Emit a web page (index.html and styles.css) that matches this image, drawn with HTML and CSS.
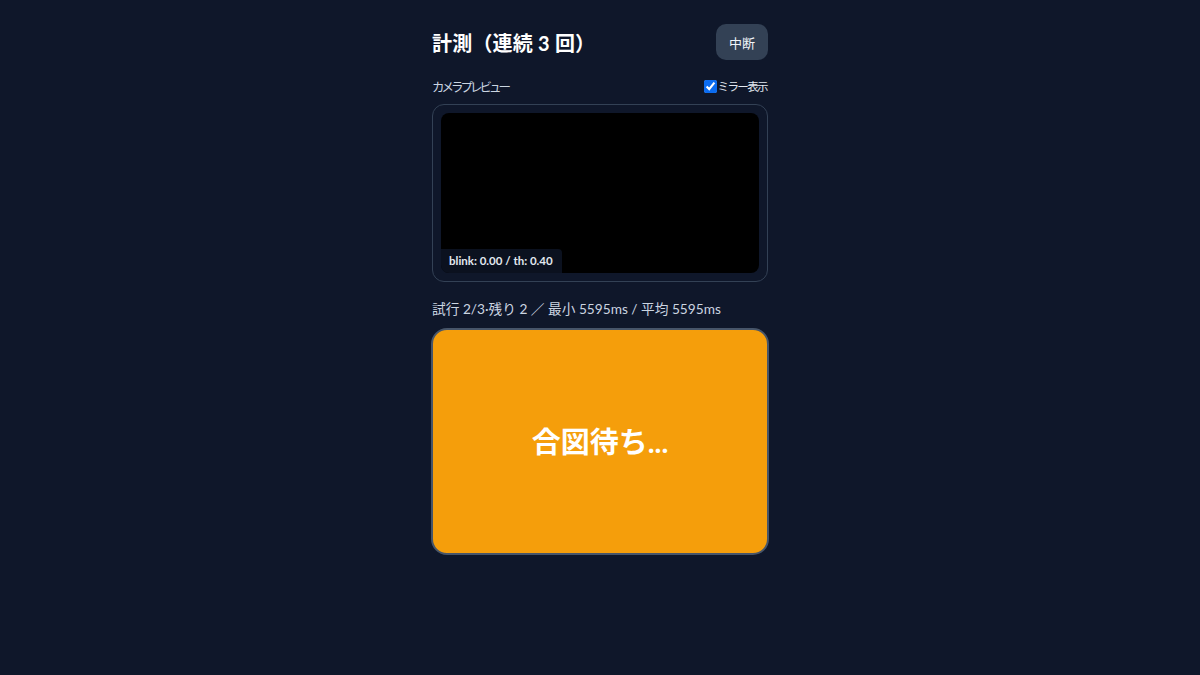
FILE: index.html
```html
<!DOCTYPE html>
<html lang="ja">
<head>
<meta charset="utf-8">
<link rel="stylesheet" href="styles.css">
</head>
<body>
<main class="app">
  <header class="head">
    <h1 class="title">計測（連続 3 回）</h1>
    <button class="stop">中断</button>
  </header>
  <div class="label-row">
    <span class="label">カメラプレビュー</span>
    <label class="mirror"><input type="checkbox" checked> ミラー表示</label>
  </div>
  <div class="preview">
    <div class="video">
      <span class="overlay">blink: 0.00 / th: 0.40</span>
    </div>
  </div>
  <p class="stats">試行 2/3·残り 2 ／ 最小 5595ms / 平均 5595ms</p>
  <div class="signal">合図待ち...</div>
</main>
</body>
</html>
```
FILE: styles.css
```css
html, body {
  margin: 0;
  padding: 0;
  background: #0f172a;
  color: #e2e8f0;
  font-family: Lato, "Noto Sans CJK JP", sans-serif;
}
.app {
  width: 336px;
  margin: 0 auto;
  padding-top: 24px;
}
.head {
  display: flex;
  justify-content: space-between;
  align-items: center;
  height: 36px;
}
.title {
  margin: 0;
  font-size: 20px;
  font-weight: 700;
  color: #ffffff;
  letter-spacing: 0.2px;
}
.stop {
  width: 52px;
  height: 36px;
  border: none;
  border-radius: 10px;
  background: #334155;
  color: #f1f5f9;
  font-family: inherit;
  font-size: 13px;
  padding: 0;
}
.label-row {
  display: flex;
  justify-content: space-between;
  align-items: center;
  margin-top: 16px;
  height: 20px;
}
.label {
  font-size: 12.5px;
  color: #cbd5e1;
  letter-spacing: -3px;
}
.mirror {
  display: flex;
  align-items: center;
  font-size: 11.5px;
  color: #e2e8f0;
  letter-spacing: -1.6px;
  margin-right: 1px;
}
.mirror input {
  width: 13px;
  height: 13px;
  margin: 0 1px 0 0;
  accent-color: #0b6cf0;
}
.preview {
  margin-top: 8px;
  border: 1px solid #334155;
  border-radius: 12px;
  padding: 8px;
  background: #0f172a;
}
.video {
  position: relative;
  height: 160px;
  background: #000;
  border-radius: 8px;
  overflow: hidden;
}
.overlay {
  position: absolute;
  left: 0;
  bottom: 0;
  background: rgba(15, 23, 42, 0.75);
  color: #e2e8f0;
  font-size: 11.5px;
  font-weight: 700;
  padding: 5px 9px 6px 8px;
  border-top-right-radius: 4px;
}
.stats {
  margin: 18px 0 0 0;
  font-size: 13.7px;
  color: #cbd5e1;
  line-height: 18px;
}
.signal {
  margin: 10px -1px 0 -1px;
  background: #f59e0b;
  border: 2px solid #475569;
  border-radius: 16px;
  display: flex;
  align-items: center;
  justify-content: center;
  color: #ffffff;
  font-size: 29px;
  font-weight: 700;
  padding-bottom: 4px;
  box-sizing: border-box;
  height: 227px;
}
```
